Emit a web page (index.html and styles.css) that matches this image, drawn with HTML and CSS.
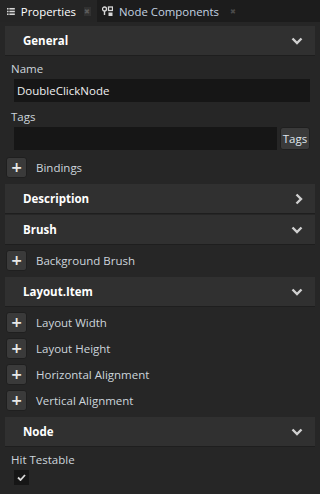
FILE: index.html
```html
<!DOCTYPE html>
<html>
<head>
    <title>Properties</title>
    <link rel="stylesheet" href="styles.css">
</head>
<body>
    <div class="tabs">
        <div class="tab active">
            <svg class="tab-icon" width="10" height="9" viewBox="0 0 10 9">
                <rect x="0" y="0" width="2" height="2" fill="#d8d8d8"/>
                <rect x="3" y="0" width="7" height="2" fill="#d8d8d8"/>
                <rect x="0" y="3.5" width="2" height="2" fill="#d8d8d8"/>
                <rect x="3" y="3.5" width="7" height="2" fill="#d8d8d8"/>
                <rect x="0" y="7" width="2" height="2" fill="#d8d8d8"/>
                <rect x="3" y="7" width="7" height="2" fill="#d8d8d8"/>
            </svg>
            <span class="tab-title">Properties</span>
            <span class="tab-close boxed">&#x2716;</span>
        </div>
        <div class="tab">
            <svg class="tab-icon" width="11" height="11" viewBox="0 0 11 11">
                <circle cx="2.5" cy="3" r="2" fill="none" stroke="#d8d8d8" stroke-width="1.3"/>
                <rect x="1.8" y="5" width="1.4" height="4" fill="#d8d8d8"/>
                <rect x="6.5" y="1" width="4" height="3.5" fill="none" stroke="#d8d8d8" stroke-width="1.3"/>
                <rect x="6.5" y="6.5" width="4" height="3.5" fill="#d8d8d8"/>
            </svg>
            <span class="tab-title">Node Components</span>
            <span class="tab-close">&#x2716;</span>
        </div>
    </div>

    <div class="panel">
        <div class="section-header">
            <span>General</span>
            <svg class="chevron" width="12" height="8" viewBox="0 0 12 8"><path d="M1.5 1.5 L6 6 L10.5 1.5" fill="none" stroke="#d0d0d0" stroke-width="2.4"/></svg>
        </div>
        <div class="field">
            <div class="field-label">Name</div>
            <div class="text-input">DoubleClickNode</div>
        </div>
        <div class="field">
            <div class="field-label">Tags</div>
            <div class="input-row">
                <div class="text-input"></div>
                <button class="small-btn">Tags</button>
            </div>
        </div>
        <div class="add-list">
            <div class="add-row"><button class="plus">+</button><span>Bindings</span></div>
        </div>

        <div class="section-header">
            <span>Description</span>
            <svg class="chevron" width="8" height="12" viewBox="0 0 8 12"><path d="M1.5 1.5 L6 6 L1.5 10.5" fill="none" stroke="#d0d0d0" stroke-width="2.4"/></svg>
        </div>
        <div class="section-header">
            <span>Brush</span>
            <svg class="chevron" width="12" height="8" viewBox="0 0 12 8"><path d="M1.5 1.5 L6 6 L10.5 1.5" fill="none" stroke="#d0d0d0" stroke-width="2.4"/></svg>
        </div>
        <div class="add-list">
            <div class="add-row"><button class="plus">+</button><span>Background Brush</span></div>
        </div>

        <div class="section-header">
            <span>Layout.Item</span>
            <svg class="chevron" width="12" height="8" viewBox="0 0 12 8"><path d="M1.5 1.5 L6 6 L10.5 1.5" fill="none" stroke="#d0d0d0" stroke-width="2.4"/></svg>
        </div>
        <div class="add-list">
            <div class="add-row"><button class="plus">+</button><span>Layout Width</span></div>
            <div class="add-row"><button class="plus">+</button><span>Layout Height</span></div>
            <div class="add-row"><button class="plus">+</button><span>Horizontal Alignment</span></div>
            <div class="add-row"><button class="plus">+</button><span>Vertical Alignment</span></div>
        </div>

        <div class="section-header">
            <span>Node</span>
            <svg class="chevron" width="12" height="8" viewBox="0 0 12 8"><path d="M1.5 1.5 L6 6 L10.5 1.5" fill="none" stroke="#d0d0d0" stroke-width="2.4"/></svg>
        </div>
        <div class="field">
            <div class="field-label">Hit Testable</div>
            <div class="checkbox">
                <svg width="9" height="7" viewBox="0 0 9 7"><path d="M1 3.5 L3.5 6 L8 1" fill="none" stroke="#d8d8d8" stroke-width="1.8"/></svg>
            </div>
        </div>
    </div>
</body>
</html>
```

FILE: styles.css
```css
body {
    margin: 0;
    background: #262626;
    color: #d2d2d2;
    font-family: "Open Sans", "Noto Sans", sans-serif;
    font-size: 11.5px;
    width: 320px;
    height: 494px;
    overflow: hidden;
}
.tabs {
    display: flex;
    height: 22px;
    background: #1c1c1c;
}
.tab {
    display: flex;
    align-items: center;
    padding: 0 6px 0 5px;
    color: #c3d2e0;
    font-size: 11.4px;
}
.tab.active {
    width: 97px;
    box-sizing: border-box;
    padding-left: 7px;
    background: #252525;
    color: #ffffff;
}
.tab-icon {
    margin-right: 6px;
}
.tab.active .tab-icon {
    margin-right: 6px;
}
.tab-title {
    white-space: nowrap;
}
.tab-close {
    display: inline-flex;
    align-items: center;
    justify-content: center;
    width: 9px;
    height: 9px;
    margin-left: 9px;
    font-size: 7px;
    color: #4a4a4a;
}
.tab-close.boxed {
    margin-left: 8px;
    background: #313131;
    color: #5c5c5c;
}
.panel {
    padding: 0 5px;
}
.section-header {
    display: flex;
    align-items: center;
    justify-content: space-between;
    height: 30px;
    box-sizing: border-box;
    padding: 0 12px 0 18px;
    margin: 4px 0 1px 0;
    background: #303030;
    border-bottom: 1px solid #1e1e1e;
    color: #ffffff;
    font-weight: bold;
    font-size: 11.5px;
}
.section-header + .section-header {
    margin-top: 0;
}
.field {
    padding: 1px 5px 0 6px;
    margin-bottom: 3px;
}
.field-label {
    height: 21px;
    line-height: 21px;
    color: #cdd5dc;
}
.text-input {
    flex: 1;
    height: 23px;
    line-height: 23px;
    margin-left: 3px;
    padding: 0 3px;
    background: #161616;
    color: #f0f0f0;
}
.input-row {
    display: flex;
    align-items: center;
}
.small-btn {
    height: 23px;
    width: 30px;
    margin-left: 3px;
    padding: 0;
    border: 1px solid #1f1f1f;
    border-radius: 3px;
    background: #3a3a3a;
    color: #dfe6ec;
    font-family: inherit;
    font-size: 11.5px;
}
.add-list {
    padding-top: 1px;
}
.add-row {
    display: flex;
    align-items: center;
    height: 26px;
    margin-left: 1px;
}
.add-row span {
    margin-left: 9px;
    color: #cdd5dc;
}
.plus {
    width: 21px;
    height: 21px;
    padding: 0;
    border: 1px solid #1f1f1f;
    border-radius: 3px;
    background: #3a3a3a;
    color: #e8e8e8;
    font-family: "DejaVu Sans", sans-serif;
    font-weight: bold;
    font-size: 14px;
    line-height: 18px;
}
.checkbox {
    display: flex;
    align-items: center;
    justify-content: center;
    width: 15px;
    height: 15px;
    margin-left: 3px;
    background: #161616;
}
```
